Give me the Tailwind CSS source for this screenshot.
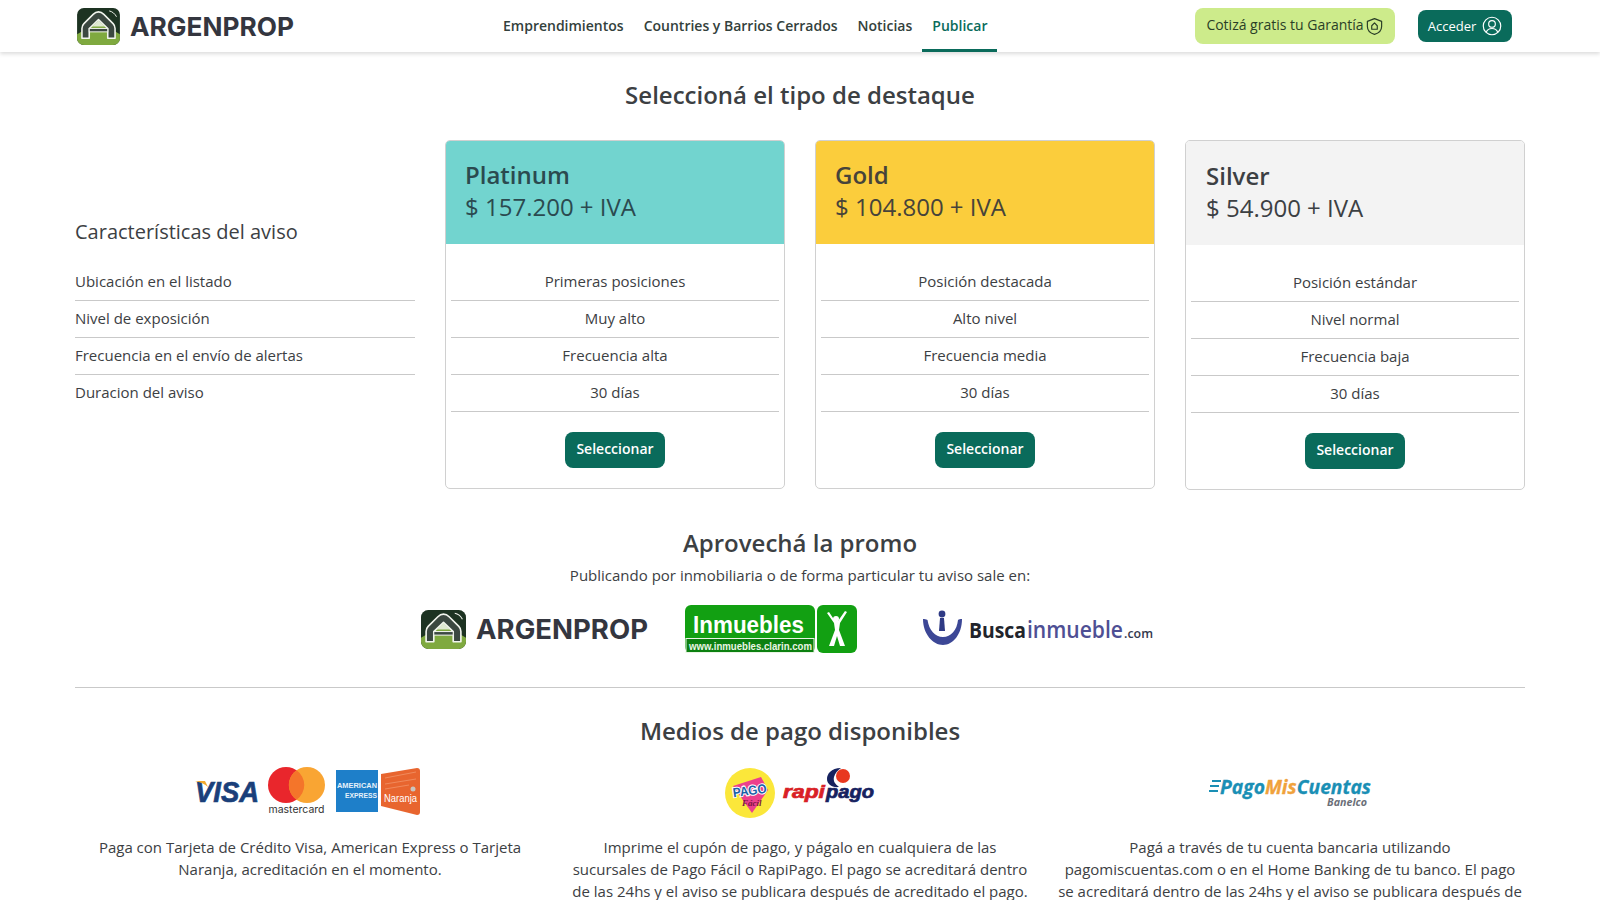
<!DOCTYPE html>
<html lang="es">
<head>
    <meta charset="utf-8">
    <title>Argenprop - Publicar</title>
    <script src="https://cdn.jsdelivr.net/npm/@tailwindcss/browser@4"></script>
</head>
<body class="bg-white font-['Open_Sans',sans-serif] text-[#3c4043]">
    <!-- logo reutilizado en header y promo -->
    <svg class="hidden">
        <symbol id="logo-mark" viewBox="0 0 44 38">
            <rect x="0" y="0" width="44" height="38" rx="7" fill="#1d3322"/>
            <path d="M0 27 L22 14 L44 27 V31 a7 7 0 0 1 -7 7 H7 a7 7 0 0 1 -7 -7 Z" fill="#7fa93f"/>
            <path d="M22 4 C24 4 26 5 27.5 6.5 L37 16 C38.5 17.5 39 19 39 21 V31 H31.5 V21 L22 12 L12.5 21 V31 H5 V21 C5 19 5.5 17.5 7 16 L16.5 6.5 C18 5 20 4 22 4 Z" fill="#3b4840" stroke="#f2f5ee" stroke-width="1.6" stroke-linejoin="round"/>
            <path d="M22 12.5 L28.5 19 H15.5 Z" fill="#dfe9d2"/>
            <rect x="12.5" y="21" width="19" height="3.5" fill="#3b4840" stroke="#f2f5ee" stroke-width="1"/>
            <path d="M33 3 C36 3.5 39 6 40.5 9" stroke="#f2f5ee" stroke-width="1" fill="none"/>
        </symbol>
    </svg>

    <header class="h-[52px] bg-white shadow-[0_2px_4px_rgba(0,0,0,0.14)] relative">
        <div class="flex items-center h-full pl-[77px] pr-[88px]">
            <a class="flex items-center gap-[10px] w-[416px] shrink-0">
                <svg class="w-[43px] h-[37px]"><use href="#logo-mark"/></svg>
                <svg class="w-[165px] h-[30px] overflow-visible" viewBox="0 0 165 30">
                    <text x="0" y="24.5" font-family="Inter, sans-serif" font-weight="700" font-size="26" textLength="164" lengthAdjust="spacingAndGlyphs" fill="#34363f">ARGENPROP</text>
                </svg>
            </a>
            <nav class="flex h-full text-[14px] font-semibold text-[#33413c]">
                <a class="flex items-center px-[10px] pb-[2px]">Emprendimientos</a>
                <a class="flex items-center px-[10px] pb-[2px]">Countries y Barrios Cerrados</a>
                <a class="flex items-center px-[10px] pb-[2px]">Noticias</a>
                <a class="flex items-center px-[10px] text-[#0a6b5b] border-b-[3px] border-[#0a6b5b] pt-[1px]">Publicar</a>
            </nav>
            <a class="ml-auto flex items-center justify-center w-[200px] h-[36px] rounded-lg bg-[#cdeb8b] text-[14px] text-[#2a3f27]">
                <span class="pb-[3px]">Cotizá gratis tu Garantía</span>
                <svg class="w-[19px] h-[19px] ml-[1px]" viewBox="0 0 24 24" fill="none" stroke="#2a3f27" stroke-width="1.5" stroke-linejoin="round">
                    <path d="M12 2 L21 5.5 V12 C21 17 17 20.5 12 22 C7 20.5 3 17 3 12 V5.5 Z"/>
                    <path d="M8.5 11 L12 7.5 L15.5 11 V15.5 H8.5 Z"/>
                </svg>
            </a>
            <a class="ml-[23px] flex items-center justify-center gap-[6px] w-[94px] h-[32px] rounded-lg bg-[#0a6b5b] text-[13px] text-white">
                <span class="pt-[2px]">Acceder</span>
                <svg class="w-[20px] h-[20px]" viewBox="0 0 24 24" fill="none" stroke="white" stroke-width="1.4">
                    <circle cx="12" cy="12" r="10.5"/>
                    <circle cx="12" cy="9.5" r="4"/>
                    <path d="M5 19.5 C6.5 16 9 15 12 15 C15 15 17.5 16 19 19.5"/>
                </svg>
            </a>
        </div>
    </header>

    <main class="px-[75px]">
        <h2 class="pt-[26px] text-center text-[24px] leading-[33px] font-semibold">Seleccioná el tipo de destaque</h2>

        <section class="grid grid-cols-4 gap-[30px] mt-[29px] items-start">
            <div class="pt-[78px]">
                <h3 class="text-[20px] leading-[27px] mb-[19px]">Características del aviso</h3>
                <div class="text-[15px]">
                    <div class="h-[37px] flex items-center pb-[2px] border-b border-[#c9c9c9]">Ubicación en el listado</div>
                    <div class="h-[37px] flex items-center pb-[2px] border-b border-[#c9c9c9]">Nivel de exposición</div>
                    <div class="h-[37px] flex items-center pb-[2px] border-b border-[#c9c9c9]">Frecuencia en el envío de alertas</div>
                    <div class="h-[37px] flex items-center pb-[3px]">Duracion del aviso</div>
                </div>
            </div>

            <div class="border border-[#d0d0d0] rounded-[5px] h-[349px] overflow-hidden">
                <div class="h-[103px] bg-[#72d4cf] pt-[18px] px-[19px] text-[24px] leading-[32px] text-[#2b4a4f]">
                    <p class="font-semibold">Platinum</p>
                    <p>$ 157.200 + IVA</p>
                </div>
                <div class="px-[5px] pt-[20px] text-[15px] text-center">
                    <div class="h-[37px] flex items-center justify-center pb-[2px] border-b border-[#c9c9c9]">Primeras posiciones</div>
                    <div class="h-[37px] flex items-center justify-center pb-[2px] border-b border-[#c9c9c9]">Muy alto</div>
                    <div class="h-[37px] flex items-center justify-center pb-[2px] border-b border-[#c9c9c9]">Frecuencia alta</div>
                    <div class="h-[37px] flex items-center justify-center pb-[2px] border-b border-[#c9c9c9]">30 días</div>
                    <button class="mt-[20px] w-[100px] h-[36px] pb-[3px] rounded-lg bg-[#0a6b5b] text-white text-[14px] font-semibold">Seleccionar</button>
                </div>
            </div>

            <div class="border border-[#d0d0d0] rounded-[5px] h-[349px] overflow-hidden">
                <div class="h-[103px] bg-[#fbcd3c] pt-[18px] px-[19px] text-[24px] leading-[32px] text-[#46433a]">
                    <p class="font-semibold">Gold</p>
                    <p>$ 104.800 + IVA</p>
                </div>
                <div class="px-[5px] pt-[20px] text-[15px] text-center">
                    <div class="h-[37px] flex items-center justify-center pb-[2px] border-b border-[#c9c9c9]">Posición destacada</div>
                    <div class="h-[37px] flex items-center justify-center pb-[2px] border-b border-[#c9c9c9]">Alto nivel</div>
                    <div class="h-[37px] flex items-center justify-center pb-[2px] border-b border-[#c9c9c9]">Frecuencia media</div>
                    <div class="h-[37px] flex items-center justify-center pb-[2px] border-b border-[#c9c9c9]">30 días</div>
                    <button class="mt-[20px] w-[100px] h-[36px] pb-[3px] rounded-lg bg-[#0a6b5b] text-white text-[14px] font-semibold">Seleccionar</button>
                </div>
            </div>

            <div class="border border-[#d0d0d0] rounded-[5px] h-[350px] overflow-hidden">
                <div class="h-[104px] bg-[#f3f3f3] pt-[19px] px-[20px] text-[24px] leading-[32px]">
                    <p class="font-semibold">Silver</p>
                    <p>$ 54.900 + IVA</p>
                </div>
                <div class="px-[5px] pt-[20px] text-[15px] text-center">
                    <div class="h-[37px] flex items-center justify-center pb-[2px] border-b border-[#c9c9c9]">Posición estándar</div>
                    <div class="h-[37px] flex items-center justify-center pb-[2px] border-b border-[#c9c9c9]">Nivel normal</div>
                    <div class="h-[37px] flex items-center justify-center pb-[2px] border-b border-[#c9c9c9]">Frecuencia baja</div>
                    <div class="h-[37px] flex items-center justify-center pb-[2px] border-b border-[#c9c9c9]">30 días</div>
                    <button class="mt-[20px] w-[100px] h-[36px] pb-[3px] rounded-lg bg-[#0a6b5b] text-white text-[14px] font-semibold">Seleccionar</button>
                </div>
            </div>
        </section>

        <section class="text-center pt-[36px]">
            <h2 class="text-[24px] leading-[33px] font-semibold">Aprovechá la promo</h2>
            <p class="text-[15px] leading-[22px] mt-[5px]">Publicando por inmobiliaria o de forma particular tu aviso sale en:</p>
            <div class="flex items-center h-[48px] mt-[19px] pl-[346px]">
                <div class="flex items-center gap-[10px] w-[264px] shrink-0">
                    <svg class="w-[45px] h-[39px]"><use href="#logo-mark"/></svg>
                    <svg class="w-[172px] h-[30px] overflow-visible" viewBox="0 0 172 30">
                        <text x="0" y="25" font-family="Inter, sans-serif" font-weight="700" font-size="27" textLength="172" lengthAdjust="spacingAndGlyphs" fill="#34363f">ARGENPROP</text>
                    </svg>
                </div>
                <!-- Clarin inmuebles -->
                <svg class="w-[172px] h-[48px] shrink-0 overflow-visible" viewBox="0 0 172 48">
                    <rect x="0" y="0" width="130" height="48" rx="6" fill="#12a012"/>
                    <rect x="1" y="33.5" width="128" height="14" fill="#0c8010" stroke="#eaf5e4" stroke-width="1"/>
                    <text x="8" y="28" font-family="Liberation Sans, sans-serif" font-weight="700" font-size="24" textLength="111" lengthAdjust="spacingAndGlyphs" fill="white">Inmuebles</text>
                    <text x="4" y="44.5" font-family="Liberation Sans, sans-serif" font-weight="700" font-size="11.5" textLength="123" lengthAdjust="spacingAndGlyphs" fill="#eaf5e4">www.inmuebles.clarin.com</text>
                    <rect x="132" y="0" width="40" height="48" rx="6" fill="#12a012"/>
                    <circle cx="151" cy="14" r="3" fill="white"/>
                    <path d="M142 8 L149 18 L150 25 L144 41 H149 L152 31 L155 41 H160 L154 25 L155 18 L162 7 L160 6 L153 16 H150 L144 7 Z" fill="white"/>
                </svg>
                <!-- Buscainmueble -->
                <svg class="w-[232px] h-[38px] ml-[65px] shrink-0 overflow-visible" viewBox="0 0 232 38">
                    <path d="M1 9 C1 24 11 35 21 35 C31 35 40 24 40 9 C38 9 37 9 36 10 C35 20 29 27 21 27 C13 27 7 20 5.5 10 C4 9 2.5 9 1 9 Z" fill="#3c4796"/>
                    <circle cx="20" cy="4" r="3.4" fill="#2f3a85"/>
                    <path d="M18 8 H22 L23 21 H17 Z" fill="#2f3a85"/>
                    <text x="47" y="28" font-family="Open Sans, sans-serif" font-weight="700" font-size="22" textLength="57" lengthAdjust="spacingAndGlyphs" fill="#22242b">Busca</text>
                    <text x="105" y="28" font-family="Open Sans, sans-serif" font-weight="600" font-size="24" textLength="96" lengthAdjust="spacingAndGlyphs" fill="#4e4f94">inmueble</text>
                    <text x="202" y="28" font-family="Open Sans, sans-serif" font-weight="600" font-size="13" textLength="29" lengthAdjust="spacingAndGlyphs" fill="#33384d">.com</text>
                </svg>
            </div>
        </section>

        <hr class="mt-[34px] border-[#c9c9c9]">

        <section class="pt-[26px]">
            <h2 class="text-center text-[24px] leading-[33px] font-semibold">Medios de pago disponibles</h2>
            <div class="grid grid-cols-3 gap-[20px] mt-[16px] text-[15px] leading-[22px] text-center">
                <div>
                    <div class="h-[60px] flex items-center justify-center pr-[5px] pb-[4px]">
                        <svg class="w-[64px] h-[28px] overflow-visible" viewBox="0 0 64 28">
                            <text x="0" y="25" font-family="Liberation Sans, sans-serif" font-weight="700" font-style="italic" font-size="29" textLength="64" lengthAdjust="spacingAndGlyphs" stroke="#1a3f7a" stroke-width="0.7" fill="#1a3f7a">VISA</text>
                            <path d="M0 4 H10 L13 10 C10 7 5 5 0 4 Z" fill="#f0a92e"/>
                        </svg>
                        <div class="flex flex-col items-center w-[57px] ml-[9px]">
                            <svg class="w-[57px] h-[36px]" viewBox="0 0 57 36">
                                <circle cx="18" cy="18" r="18" fill="#e9262c"/>
                                <circle cx="39" cy="18" r="18" fill="#f9a533"/>
                                <path d="M28.5 3.2 a18 18 0 0 1 0 29.6 a18 18 0 0 1 0 -29.6 Z" fill="#f4752a"/>
                            </svg>
                            <span class="font-['Inter',sans-serif] text-[10.5px] leading-[12px] mt-[1px] text-[#333] whitespace-nowrap">mastercard</span>
                        </div>
                        <svg class="w-[42px] h-[42px] ml-[11px] shrink-0" viewBox="0 0 42 42">
                            <rect width="42" height="42" fill="#1e7fc9"/>
                            <text x="1" y="18" font-family="Liberation Sans, sans-serif" font-weight="700" font-size="8" textLength="40" lengthAdjust="spacingAndGlyphs" fill="#e6f1fa">AMERICAN</text>
                            <text x="9" y="28" font-family="Liberation Sans, sans-serif" font-weight="700" font-size="8" textLength="32" lengthAdjust="spacingAndGlyphs" fill="#e6f1fa">EXPRESS</text>
                        </svg>
                        <svg class="w-[39px] h-[47px] ml-[3px] shrink-0" viewBox="0 0 39 47">
                            <path d="M0 6 L36 0 Q39 0 39 3 V44 Q39 47 36 47 L0 38 Z" fill="#e8652f"/>
                            <path d="M4 10 L35 4 M4 16 L35 11 M4 21 L28 17" stroke="#f08a5c" stroke-width="1"/>
                            <circle cx="32" cy="21" r="2.5" fill="#c9c5bf"/>
                            <text x="3" y="34" font-family="Liberation Sans, sans-serif" font-size="10.5" textLength="33" lengthAdjust="spacingAndGlyphs" fill="white">Naranja</text>
                        </svg>
                    </div>
                    <p class="mt-[13px] px-[20px]">Paga con Tarjeta de Crédito Visa, American Express o Tarjeta Naranja, acreditación en el momento.</p>
                </div>
                <div>
                    <div class="h-[60px] flex items-center justify-center gap-[8px]">
                        <svg class="w-[50px] h-[50px] shrink-0" viewBox="0 0 50 50">
                            <circle cx="25" cy="25" r="25" fill="#fbe73a"/>
                            <path d="M8 18 L36 9 L43 22 L27 45 Z" fill="#ec3f8c"/>
                            <text x="8" y="27" transform="rotate(-8 25 25)" font-family="Liberation Sans, sans-serif" font-weight="700" font-size="13" textLength="34" lengthAdjust="spacingAndGlyphs" stroke="white" stroke-width="2" paint-order="stroke" fill="#1b5fa8">PAGO</text>
                            <text x="17" y="38" font-family="Liberation Serif, serif" font-style="italic" font-weight="700" font-size="9" fill="#7b1342">Fácil</text>
                        </svg>
                        <svg class="w-[92px] h-[50px] shrink-0 overflow-visible" viewBox="0 0 92 50">
                            <path d="M58 0 C48 0 44 6 44 11 C44 16 49 20 56 19 C52 16 50 13 51 9 C52 5 55 2 58 0 Z" fill="#16225f"/>
                            <circle cx="60" cy="8" r="7" fill="#e8381f"/>
                            <text x="0" y="30" font-family="Liberation Sans, sans-serif" font-weight="700" font-style="italic" font-size="19" textLength="42" lengthAdjust="spacingAndGlyphs" stroke="#d91f26" stroke-width="0.7" fill="#d91f26">rapi</text>
                            <text x="43" y="30" font-family="Liberation Sans, sans-serif" font-weight="700" font-style="italic" font-size="19" textLength="48" lengthAdjust="spacingAndGlyphs" stroke="#16225f" stroke-width="0.7" fill="#16225f">pago</text>
                        </svg>
                    </div>
                    <p class="mt-[13px]">Imprime el cupón de pago, y págalo en cualquiera de las sucursales de Pago Fácil o RapiPago. El pago se acreditará dentro de las 24hs y el aviso se publicara después de acreditado el pago.</p>
                </div>
                <div>
                    <div class="h-[60px] flex items-center justify-center">
                        <svg class="w-[164px] h-[32px] overflow-visible" viewBox="0 0 164 32">
                            <path d="M4 4 H13 M2 9 H11 M1 14 H10" stroke="#1a8fb5" stroke-width="2.2"/>
                            <text x="12" y="17" font-family="Open Sans, sans-serif" font-weight="700" font-style="italic" font-size="20" textLength="151" lengthAdjust="spacingAndGlyphs" stroke="#1a8fb5" stroke-width="0.3" fill="#1a8fb5">Pago<tspan fill="#f0a23c" stroke="#f0a23c">Mis</tspan>Cuentas</text>
                            <text x="119" y="29" font-family="Open Sans, sans-serif" font-weight="700" font-style="italic" font-size="10" textLength="40" lengthAdjust="spacingAndGlyphs" fill="#6b6f78">Banelco</text>
                        </svg>
                    </div>
                    <p class="mt-[13px]">Pagá a través de tu cuenta bancaria utilizando pagomiscuentas.com o en el Home Banking de tu banco. El pago se acreditará dentro de las 24hs y el aviso se publicara después de acreditado el pago.</p>
                </div>
            </div>
        </section>
    </main>
</body>
</html>
